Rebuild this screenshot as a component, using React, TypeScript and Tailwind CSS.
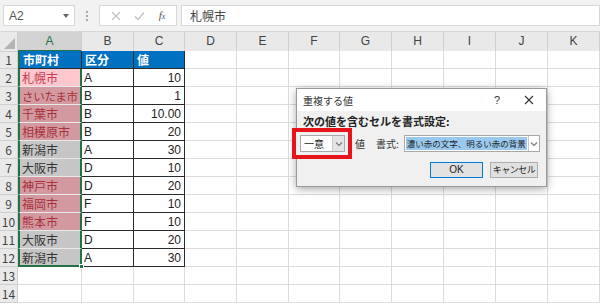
import React from 'react';

const cols = ['A', 'B', 'C', 'D', 'E', 'F', 'G', 'H', 'I', 'J', 'K'];

type Row = { city: string; kubun: string; value: string; tone: 'active' | 'dup' | 'plain' };

const rows: Row[] = [
  { city: '札幌市', kubun: 'A', value: '10', tone: 'active' },
  { city: 'さいたま市', kubun: 'B', value: '1', tone: 'dup' },
  { city: '千葉市', kubun: 'B', value: '10.00', tone: 'dup' },
  { city: '相模原市', kubun: 'B', value: '20', tone: 'dup' },
  { city: '新潟市', kubun: 'A', value: '30', tone: 'plain' },
  { city: '大阪市', kubun: 'D', value: '10', tone: 'plain' },
  { city: '神戸市', kubun: 'D', value: '20', tone: 'dup' },
  { city: '福岡市', kubun: 'F', value: '10', tone: 'dup' },
  { city: '熊本市', kubun: 'F', value: '10', tone: 'dup' },
  { city: '大阪市', kubun: 'D', value: '20', tone: 'plain' },
  { city: '新潟市', kubun: 'A', value: '30', tone: 'plain' },
];

const gridCols = 'grid grid-cols-[18px_64px_52px_51px_52px_52px_51px_52px_52px_52px_52px_52px]';

function Chevron() {
  return (
    <svg width="8" height="6" viewBox="0 0 8 6" fill="none">
      <path d="M1 1.5 L4 4.5 L7 1.5" stroke="#777" strokeWidth="1.1" />
    </svg>
  );
}

function EmptyCells({ from }: { from: number }) {
  return (
    <>
      {cols.slice(from).map(c => (
        <div key={c} className="h-[18px] border-r border-b border-[#dcdcdc] bg-white" />
      ))}
    </>
  );
}

function RowHead({ n }: { n: number }) {
  return (
    <div className="h-[18px] border-r border-b border-[#cfcfcf] bg-[#e9e9e9] text-[12px] leading-[18px] text-center text-[#444]">
      {n}
    </div>
  );
}

export default function App() {
  const cityTone = (t: Row['tone']) => {
    switch (t) {
      case 'active': return 'bg-[#ffc7ce] text-[#c0404e]';
      case 'dup': return 'bg-[#d29aa0] text-[#a8303c]';
      default: return 'bg-[#c6c6c6] text-[#333]';
    }
  };

  return (
    <div className="relative w-[600px] h-[304px] overflow-hidden bg-white text-[#222]" style={{ fontFamily: '"Noto Sans CJK JP", "Liberation Sans", sans-serif' }}>
      {/* formula bar */}
      <div className="h-[32px] bg-[#f2f2f2] flex items-start pt-[5px] pl-[3px] gap-[4px] border-b border-[#d6d6d6]">
        <div className="w-[72px] h-[21px] bg-white border border-[#d8d8d8] flex items-center justify-between px-[5px]">
          <span className="text-[12px] text-[#555]" style={{ fontFamily: '"Liberation Sans", sans-serif' }}>A2</span>
          <svg width="6" height="4" viewBox="0 0 6 4"><path d="M0 0 L6 0 L3 4 Z" fill="#666" /></svg>
        </div>
        <div className="w-[16px] h-[21px] flex flex-col items-center justify-center gap-[2px]">
          <span className="w-[2px] h-[2px] bg-[#aaa]" />
          <span className="w-[2px] h-[2px] bg-[#aaa]" />
          <span className="w-[2px] h-[2px] bg-[#aaa]" />
        </div>
        <div className="w-[78px] h-[21px] bg-white border border-[#d8d8d8] flex items-center justify-around px-[4px]">
          <svg width="10" height="10" viewBox="0 0 10 10"><path d="M1 1 L9 9 M9 1 L1 9" stroke="#c2c2c2" strokeWidth="1.2" /></svg>
          <svg width="11" height="10" viewBox="0 0 11 10"><path d="M1 5.5 L4 8.5 L10 1.5" stroke="#c2c2c2" strokeWidth="1.2" fill="none" /></svg>
          <span className="text-[11px] italic text-[#555]" style={{ fontFamily: '"Liberation Serif", serif' }}>f<span className="text-[8px]">x</span></span>
        </div>
        <div className="flex-1 h-[21px] bg-white border border-[#d8d8d8] flex items-center pl-[8px]">
          <span className="text-[12px] text-[#444]">札幌市</span>
        </div>
      </div>

      {/* column headers */}
      <div className={`${gridCols} h-[19px]`}>
        <div className="bg-[#e9e9e9] border-r border-b border-[#cfcfcf] relative">
          <svg className="absolute right-[2px] bottom-[2px]" width="11" height="11" viewBox="0 0 11 11"><path d="M11 0 L11 11 L0 11 Z" fill="#b4b4b4" /></svg>
        </div>
        {cols.map(c => (
          <div
            key={c}
            className={`text-[12px] leading-[18px] text-center border-r border-[#cfcfcf] ${c === 'A' ? 'bg-[#d2d2d2] text-[#217346] border-b-2 border-b-[#217346]' : 'bg-[#e9e9e9] text-[#444] border-b'}`}
            style={{ fontFamily: '"Liberation Sans", sans-serif' }}
          >
            {c}
          </div>
        ))}
      </div>

      {/* sheet body */}
      <div className={gridCols}>
        <RowHead n={1} />
        <div className="h-[18px] bg-[#0070c0] text-white font-bold text-[12px] leading-[18px] pl-[3px] border-r border-b border-[#2a2a2a] border-l-2 border-l-[#217346]">市町村</div>
        <div className="h-[18px] bg-[#0070c0] text-white font-bold text-[12px] leading-[18px] pl-[3px] border-r border-b border-[#2a2a2a]">区分</div>
        <div className="h-[18px] bg-[#0070c0] text-white font-bold text-[12px] leading-[18px] pl-[3px] border-r border-b border-[#2a2a2a]">値</div>
        <EmptyCells from={3} />

        {rows.map((r, i) => (
          <React.Fragment key={i}>
            <RowHead n={i + 2} />
            <div className={`relative h-[18px] text-[12px] leading-[18px] pl-[2px] whitespace-nowrap border-l-2 border-l-[#217346] border-r-2 border-r-[#217346] border-b ${i === rows.length - 1 ? 'border-b-2 border-b-[#217346]' : 'border-b-[#e8e8e8]'} ${cityTone(r.tone)}`}>
              <span className={r.city.length > 4 ? 'text-[11.5px] tracking-[-0.3px]' : ''}>{r.city}</span>
              {i === rows.length - 1 && (
                <span className="absolute -right-[4px] -bottom-[4px] w-[5px] h-[5px] bg-[#217346] border border-white" />
              )}
            </div>
            <div className="h-[18px] text-[12px] leading-[18px] pl-[2px] border-r border-b border-[#2a2a2a] bg-white" style={{ fontFamily: '"Liberation Sans", sans-serif' }}>{r.kubun}</div>
            <div className="h-[18px] text-[12px] leading-[18px] pr-[3px] text-right border-r border-b border-[#2a2a2a] bg-white" style={{ fontFamily: '"Liberation Sans", sans-serif' }}>{r.value}</div>
            <EmptyCells from={3} />
          </React.Fragment>
        ))}

        {[13, 14].map(n => (
          <React.Fragment key={n}>
            <RowHead n={n} />
            <EmptyCells from={0} />
          </React.Fragment>
        ))}
      </div>

      {/* duplicate values dialog */}
      <div className="absolute left-[296px] top-[88px] w-[251px] h-[99px] bg-[#f0f0f0] border border-[#9a9a9a] shadow-[0_2px_8px_rgba(0,0,0,0.35)] flex flex-col">
        <div className="h-[22px] bg-white flex items-center justify-between pl-[6px] pr-[12px]">
          <span className="text-[10px] text-[#333]">重複する値</span>
          <div className="flex items-center gap-[24px]">
            <span className="text-[11px] text-[#333]" style={{ fontFamily: '"Liberation Sans", sans-serif' }}>?</span>
            <svg width="10" height="10" viewBox="0 0 10 10"><path d="M1 1 L9 9 M9 1 L1 9" stroke="#333" strokeWidth="1.1" /></svg>
          </div>
        </div>
        <div className="pl-[6px] pt-[4px] h-[17px] text-[11px] leading-[13px] font-bold text-[#222]">次の値を含むセルを書式設定:</div>
        <div className="flex items-center">
          <div className="shrink-0 w-[60px] h-[31px] border-[4px] border-[#e8141c] -ml-[5px] flex items-center pl-[4px] bg-[#f0f0f0]">
            <div className="w-[45px] h-[17px] bg-white border border-[#a8a8a8] flex items-center justify-between">
              <span className="text-[10px] pl-[3px] text-[#222]">一意</span>
              <span className="w-[12px] h-full bg-[#e4e4e4] border-l border-[#c8c8c8] flex items-center justify-center"><Chevron /></span>
            </div>
          </div>
          <span className="ml-[3px] text-[10px] text-[#333]">値</span>
          <span className="ml-[11px] text-[10px] text-[#333] whitespace-nowrap">書式:</span>
          <div className="shrink-0 ml-[5px] w-[136px] h-[17px] bg-white border border-[#a8a8a8] flex items-center justify-between pl-[1px] overflow-hidden">
            <span className="h-[13px] bg-[#99c9ef] text-[8.5px] leading-[13px] text-[#222] px-[1px] whitespace-nowrap">濃い赤の文字、明るい赤の背景</span>
            <span className="shrink-0 w-[11px] h-full border-l border-[#c8c8c8] flex items-center justify-center"><Chevron /></span>
          </div>
        </div>
        <div className="flex justify-end gap-[7px] pr-[8px] mt-[3px]">
          <div className="w-[53px] h-[16px] bg-[#e1e1e1] border border-[#0078d7] text-[10px] leading-[14px] text-center text-[#222]" style={{ fontFamily: '"Liberation Sans", sans-serif' }}>OK</div>
          <div className="w-[48px] h-[16px] bg-[#e1e1e1] border border-[#adadad] text-[9px] leading-[14px] text-center text-[#222] whitespace-nowrap tracking-[-0.5px]">キャンセル</div>
        </div>
      </div>
    </div>
  );
}
